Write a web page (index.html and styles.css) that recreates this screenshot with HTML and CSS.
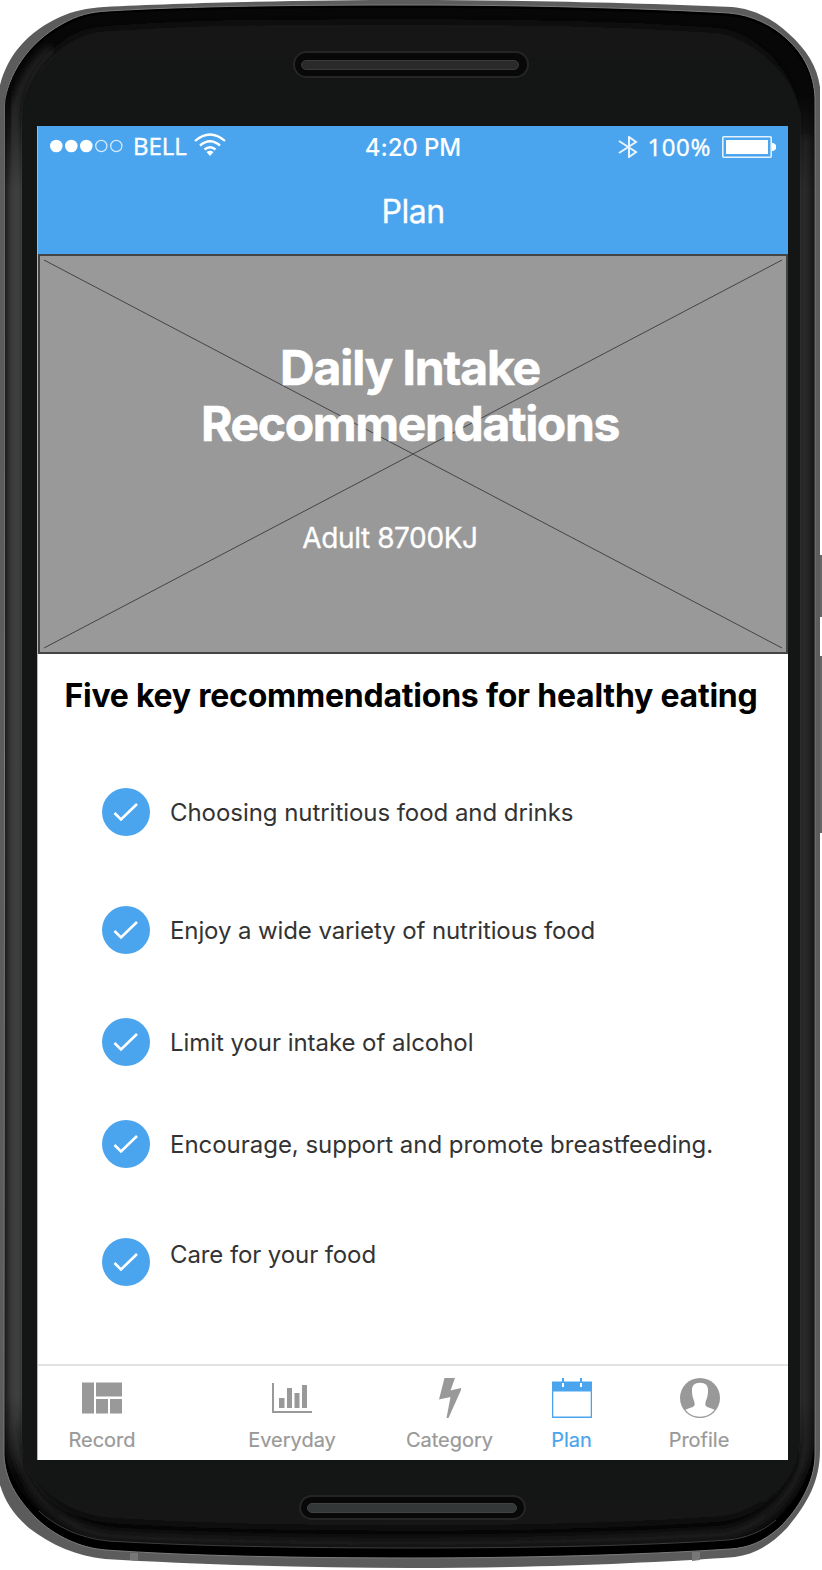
FILE: index.html
```
<!DOCTYPE html>
<html lang="en">
<head>
<meta charset="utf-8">
<title>Plan</title>
<link rel="stylesheet" href="styles.css">
</head>
<body>
<div class="device">
  <svg class="frame" width="822" height="1570" viewBox="0 0 822 1570" aria-hidden="true">
    <defs>
      <linearGradient id="left" x1="5" x2="22" y1="0" y2="0" gradientUnits="userSpaceOnUse">
        <stop offset="0" stop-color="#1c1c1c"/><stop offset=".35" stop-color="#383838"/><stop offset="1" stop-color="#4a4a4a"/>
      </linearGradient>
      <linearGradient id="right" x1="800" x2="815" y1="0" y2="0" gradientUnits="userSpaceOnUse">
        <stop offset="0" stop-color="#343434"/><stop offset=".5" stop-color="#262626"/><stop offset="1" stop-color="#141414"/>
      </linearGradient>
      <linearGradient id="fade" x1="0" x2="0" y1="0" y2="1">
        <stop offset=".06" stop-color="#fff" stop-opacity="0"/><stop offset=".12" stop-color="#fff"/>
        <stop offset=".89" stop-color="#fff"/><stop offset=".94" stop-color="#fff" stop-opacity="0"/>
      </linearGradient>
      <filter id="soft" x="-10%" y="-10%" width="120%" height="120%"><feGaussianBlur stdDeviation="4"/></filter>
      <mask id="sides"><rect width="822" height="1570" fill="url(#fade)"/></mask>
      <clipPath id="body"><path d="M5 105C7 77 29 46 63 27C79 18 91 14 109 13C190 9 300 8 411 8S640 11 728 16C752 18 771 28 784 40C802 56 813 76 814 98V1445C812 1476 796 1502 776 1520C762 1532 746 1538 728 1540C640 1546 520 1548 411 1548S190 1546 108 1541C80 1538 56 1527 39 1511C16 1490 5 1467 5 1445Z"/></clipPath>
    </defs>
    <path fill="#666" d="M819 555h3v62h-3zM819 656h3v177h-3z"/>
    <path fill="#5c5c5c" d="M0 85C8 54 29 31 60 17C73 11 87 8 104 7C180 3 300 0 411 0S640 3 732 7C755 9 774 20 788 33C807 50 817 66 820 87V1450C820 1483 806 1505 787 1528C771 1545 755 1554 735 1557C640 1564 520 1568 411 1568S190 1564 105 1559C76 1556 51 1545 29 1528C13 1514 5 1501 0 1485Z"/>
    <path fill="#000" stroke="#7c7c7c" d="M5 105C7 75 28 43 62 24C78 15 90 12 108 11C190 6 300 5 411 5S640 8 729 13C753 15 773 26 786 38C804 54 814 74 815 98V1455C815 1482 798 1510 779 1528C763 1542 748 1548 730 1549C640 1555 520 1558 411 1558S190 1556 106 1550C80 1548 55 1536 37 1519C15 1497 5 1478 4 1455Z"/>
    <g clip-path="url(#body)">
      <path fill="#070707" d="M0 0h822v1570H0z"/>
      <path fill="none" stroke="#2c2c2c" stroke-width="9" stroke-linecap="round" filter="url(#soft)" d="M15 1420V115C18 90 34 66 50 52"/>
      <path fill="none" stroke="#242424" stroke-width="8" stroke-linecap="round" filter="url(#soft)" d="M806 140V1440C803 1484 772 1524 726 1534C640 1540 520 1543 411 1543S190 1541 110 1536C55 1528 17 1486 14 1420"/>
      <g mask="url(#sides)"><path fill="url(#left)" d="M5 80h18v1400H5z"/><path fill="url(#right)" d="M799 80h15v1400h-15z"/></g>
      <path fill="#141616" filter="url(#soft)" d="M24 112C26 77 52 40 94 30C180 22 300 22 411 22S640 24 722 31C765 41 791 76 798 112V1440C796 1480 765 1514 720 1519C640 1525 520 1528 411 1528S190 1526 106 1520C60 1514 24 1488 24 1440Z"/>
      <path fill="#141616" d="M22 120C22 98 35 73 56 58H766C787 75 799 97 800 120V1440C798 1468 785 1487 764 1502H64C38 1490 22 1468 22 1440Z"/>
    </g>
    <path fill="none" stroke="#3d3d3d" d="M39 1511C56 1527 80 1538 108 1541C190 1546 300 1548 411 1548S640 1546 728 1540C746 1538 762 1532 776 1520"/>
    <rect x="294" y="52" width="234" height="25" rx="12.5" fill="#080808" stroke="#252525" stroke-width="2"/>
    <rect x="301.500" y="60.500" width="217" height="9" rx="4.500" fill="#2a2a2a" stroke="#3b3b3b"/>
    <rect x="300" y="1496" width="225" height="23" rx="11.5" fill="#080808" stroke="#252525" stroke-width="2"/>
    <rect x="307.500" y="1503.500" width="209" height="9" rx="4.500" fill="#343737" stroke="#424242"/>
    <path fill="#777" d="M130 1553h8v8l-8-1zM692 1552h8v8l-8 1z"/>
  </svg>

  <main class="screen">
    <header class="topbar">
      <div class="status">
        <div class="status-left">
          <svg width="74" height="14" viewBox="0 0 74 14"><g fill="#fff"><circle cx="6.3" cy="7" r="6.3"/><circle cx="21.3" cy="7" r="6.3"/><circle cx="36.3" cy="7" r="6.3"/></g><g fill="none" stroke="#d5ebfd" stroke-width="1.3"><circle cx="51.3" cy="7" r="5.6"/><circle cx="66.3" cy="7" r="5.6"/></g></svg>
          <span class="carrier">BELL</span>
          <svg class="wifi" width="32" height="23" viewBox="0 0 32 23" fill="none" stroke="#fff" stroke-width="2.3"><path d="M1 8Q16-5 31 8M6 12.5Q16 4 26 12.500M10.500 16.500Q16 12 21.500 16.500"/><path fill="#fff" stroke="none" d="M12.500 19q3.500-2.500 7 0L16 23z"/></svg>
        </div>
        <time class="clock">4:20 PM</time>
        <div class="status-right">
          <svg width="20" height="22" viewBox="0 0 20 22" fill="none" stroke="#e8f4fe" stroke-width="2"><path d="M1 5l17 11-7 5V1l7 5L1 17"/></svg>
          <span class="percent">100%</span>
          <svg width="54" height="22" viewBox="0 0 54 22"><rect x=".8" y=".8" width="48.400" height="20.400" rx="1" fill="none" stroke="#e4f2fe" stroke-width="1.600"/><path fill="#fff" d="M4 4h42v14H4zM50 7h1.500l2.500 2v4l-2.500 2H50z"/></svg>
        </div>
      </div>
      <h1 class="page-title">Plan</h1>
    </header>

    <section class="hero">
      <svg class="cross" width="750" height="400" viewBox="0 0 750 400" fill="none" stroke="#444"><path d="M6 6L744 394M744 6L6 394"/></svg>
      <h2 class="hero-title"><span class="t1">Daily Intake</span><br><span class="t2">Recommendations</span></h2>
      <p class="hero-sub">Adult 8700KJ</p>
    </section>

    <section class="tips">
      <h3 class="tips-title">Five key recommendations for healthy eating</h3>
      <ul class="list">
        <li class="tip"><svg class="check" viewBox="0 0 48 48"><circle cx="24" cy="24" r="24"/><path d="M12.500 25l6.500 6.500L35 16"/></svg><span>Choosing nutritious food and drinks</span></li>
        <li class="tip"><svg class="check" viewBox="0 0 48 48"><circle cx="24" cy="24" r="24"/><path d="M12.500 25l6.500 6.500L35 16"/></svg><span class="tight">Enjoy a wide variety of nutritious food</span></li>
        <li class="tip tip-mid"><svg class="check" viewBox="0 0 48 48"><circle cx="24" cy="24" r="24"/><path d="M12.500 25l6.500 6.500L35 16"/></svg><span>Limit your intake of alcohol</span></li>
        <li class="tip tip-near"><svg class="check" viewBox="0 0 48 48"><circle cx="24" cy="24" r="24"/><path d="M12.500 25l6.500 6.500L35 16"/></svg><span class="loose">Encourage, support and promote breastfeeding.</span></li>
        <li class="tip tip-last"><svg class="check" viewBox="0 0 48 48"><circle cx="24" cy="24" r="24"/><path d="M12.500 25l6.500 6.500L35 16"/></svg><span class="tight">Care for your food</span></li>
      </ul>
    </section>

    <nav class="tabs">
      <a class="tab"><svg width="40" height="40" viewBox="0 0 40 40"><path d="M0 4.500h12v31H0zM14 4.500h26v14H14zM14 21h12v14.500H14zM28 21h12v14.500H28z"/></svg><span>Record</span></a>
      <a class="tab"><svg width="40" height="40" viewBox="0 0 40 40"><path d="M0 5h2v28h38v2H0zM7 20h5.500v10H7zM15 10h5v20h-5zM22.500 15h5v15h-5zM30 7h5v23h-5z"/></svg><span>Everyday</span></a>
      <a class="tab"><svg width="40" height="40" viewBox="0 0 40 40"><path d="M14.500 0H25L20.500 12.500 31 10 31 12 18.500 40H16.500L20.500 19 9 21.500z"/></svg><span>Category</span></a>
      <a class="tab active"><svg width="40" height="40" viewBox="0 0 40 40"><path fill-rule="evenodd" d="M0 3.500h10V0h2v3.500h16V0h2v3.500h10V40H0zM1.300 13.500v25h37.400v-25zM10 5v4h2V5zM28 5v4h2V5z"/></svg><span>Plan</span></a>
      <a class="tab profile"><svg width="40" height="40" viewBox="0 0 40 40"><circle cx="20" cy="20" r="20"/><path fill="#fff" d="M20 4.700c5.500 0 8.300 2.800 8 8.300 0 2-.2 4-.7 6-.8 3-2 4.500-2 7.500 0 2.500 4 3 9.200 5.300C31 36.500 26 38.700 20 38.700S9 36.500 5.500 31.800c5.200-2.300 9.200-2.800 9.200-5.300 0-3-1.200-4.500-2-7.500-.5-2-.7-4-.7-6-.3-5.500 2.500-8.300 8-8.300z"/></svg><span>Profile</span></a>
    </nav>
  </main>
</div>
</body>
</html>
```
FILE: styles.css
```
* { box-sizing: border-box; }
body, h1, h2, h3, p, ul { margin: 0; padding: 0; }
body { background: #fff; font-family: Inter, "Liberation Sans", sans-serif; }
svg { display: block; flex: none; }

.device { position: relative; width: 822px; height: 1570px; padding: 126px 34px 110px 38px; overflow: hidden; }
.frame { position: absolute; left: 0; top: 0; }
.screen { position: relative; display: flex; flex-direction: column; width: 750px; height: 1334px; background: #fff; box-shadow: -1px 0 #b5b8b0; }

.topbar { height: 128px; background: #4ba5ee; color: #fff; }
.status { display: grid; grid-template-columns: 1fr auto 1fr; align-items: center; height: 42px; padding: 0 12px; }
.status-left { display: flex; align-items: center; height: 30px; padding-bottom: 3px; }
.carrier { margin-left: 9px; font: 24px/30px "Open Sans", sans-serif; -webkit-text-stroke: .4px #fff; }
.wifi { margin: -2px 0 0 7px; }
.clock { padding-top: 2px; font-size: 24px; line-height: 30px; font-weight: 450; letter-spacing: -.1px; }
.status-right { display: flex; align-items: center; justify-content: flex-end; }
.percent { margin: 0 11px 0 9px; font: 24px/30px "Noto Sans", sans-serif; letter-spacing: .6px; -webkit-text-stroke: .3px #fff; }
.page-title { padding-top: 25px; text-align: center; font-size: 32px; line-height: 38px; font-weight: 400; letter-spacing: -.5px; -webkit-text-stroke: .3px #fff; }

.hero { position: relative; height: 400px; padding-top: 84px; border: 2px solid #444; background: #999; color: #fff; text-align: center; }
.cross { position: absolute; left: -2px; top: -2px; }
.hero-title { position: relative; padding-right: 6px; font-size: 48px; line-height: 56px; font-weight: 700; -webkit-text-stroke: .6px #fff; }
.t1 { letter-spacing: -1.15px; }
.t2 { letter-spacing: -1.35px; }
.hero-sub { position: relative; padding: 69px 46px 0 0; font-size: 28px; line-height: 34px; letter-spacing: -.4px; -webkit-text-stroke: .3px #fff; }

.tips { flex: 1; padding-top: 23px; }
.tips-title { padding-right: 4px; text-align: center; font-size: 32px; line-height: 38px; font-weight: 700; letter-spacing: -.23px; color: #000; white-space: nowrap; }
.list { padding: 73px 0 0 64px; list-style: none; }
.tip { display: flex; align-items: center; gap: 20px; height: 48px; margin-bottom: 70px; font-size: 24px; line-height: 30px; letter-spacing: -.05px; color: #333; white-space: nowrap; }
.tip span { padding-top: 2px; }
.tip .tight { letter-spacing: -.1px; }
.tip .loose { letter-spacing: -.03px; }
.tip-mid { margin-top: -6px; margin-bottom: 54px; }
.tip-last span { margin-top: -16px; }
.check { width: 48px; height: 48px; fill: #4ba5ee; }
.check path { fill: none; stroke: #fff; stroke-width: 2.6; }

.tabs { display: grid; grid-template-columns: 128px 252px 63px 181px 76px; height: 96px; padding: 12px 0 0; border-top: 2px solid #e2e2e2; }
.tab { display: flex; flex-direction: column; align-items: center; gap: 9px; font-size: 20px; line-height: 26px; color: #999; fill: #999; -webkit-text-stroke: .2px currentColor; }
.active { color: #4ba5ee; fill: #4ba5ee; }
.profile { padding-right: 2px; }
.profile svg { margin-right: -2px; }
```
